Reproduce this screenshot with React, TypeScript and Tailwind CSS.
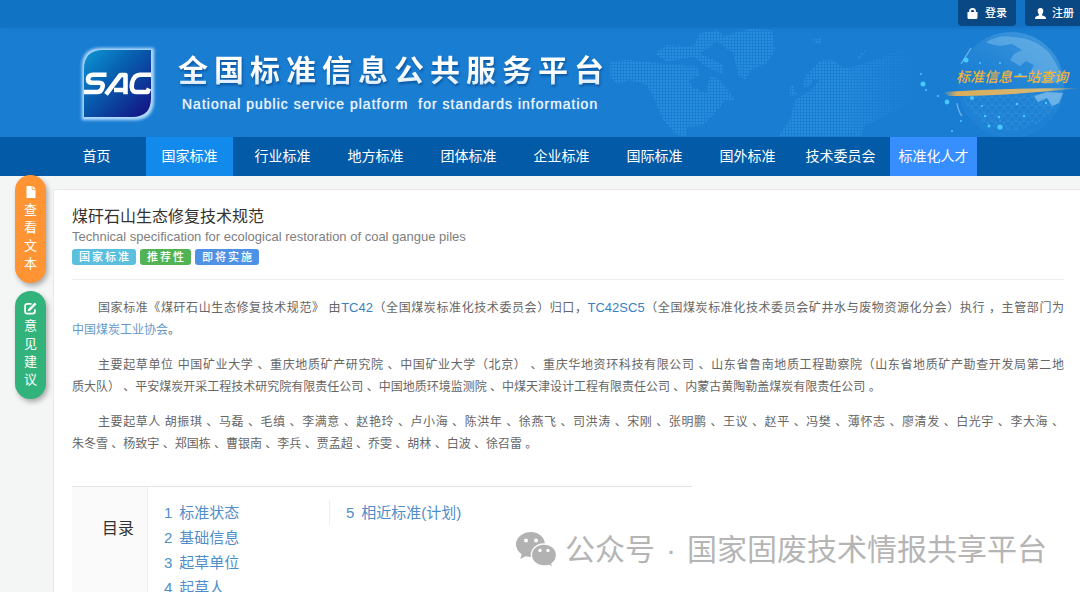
import React from "react";
import { FaFile } from "react-icons/fa";

const navItems = ["首页", "国家标准", "行业标准", "地方标准", "团体标准", "企业标准", "国际标准", "国外标准", "技术委员会", "标准化人才"];

const navTone = (i: number) =>
  i === 1 ? "bg-[#118aec]" : i === 9 ? "bg-[#378fff]" : "";

function Logo() {
  return (
    <svg width="80" height="80" viewBox="0 0 80 80" className="shrink-0" role="img" aria-label="SAC">
      <defs>
        <linearGradient id="logoFill" x1="0" y1="0" x2="1" y2="1">
          <stop offset="0" stopColor="#0c96d4" />
          <stop offset="0.45" stopColor="#0759ab" />
          <stop offset="1" stopColor="#150d80" />
        </linearGradient>
        <filter id="logoGlow" x="-20%" y="-20%" width="140%" height="140%">
          <feGaussianBlur stdDeviation="1.5" />
        </filter>
      </defs>
      <path d="M23 4H76V55Q76 76 56 76H4V23Q4 4 23 4Z" fill="#b4dcff" filter="url(#logoGlow)" />
      <path d="M25 6H73V54Q73 73 54 73H6V25Q6 6 25 6Z" fill="url(#logoFill)" />
      <g fill="none" stroke="#fff" strokeWidth="4.6" strokeLinejoin="round">
        <path d="M28.500 30.800H15Q10.500 31 10 35Q10 38.700 14 38.700H21Q25.500 38.700 24.500 43Q23.500 48 19 48H6" />
        <path d="M28 50.300L42.500 31H47.500L47.500 50.300M36 46H46" />
        <path d="M73 30.800H62Q56 31 54 39Q52.500 48 58.500 48H69.500L71 44.500" />
      </g>
    </svg>
  );
}

function HeaderArt() {
  return (
    <svg viewBox="0 0 480 111" width="480" height="111" className="absolute right-0 bottom-0" aria-hidden="true">
      <defs>
        <pattern id="mapDots" width="9" height="9" patternUnits="userSpaceOnUse">
          <rect width="6.500" height="6.500" fill="#42adf2" />
        </pattern>
        <linearGradient id="mapFade">
          <stop offset="0" stopColor="#fff" />
          <stop offset="0.75" stopColor="#fff" />
          <stop offset="1" stopColor="#000" />
        </linearGradient>
        <mask id="mapMask" maskUnits="userSpaceOnUse" x="0" y="0" width="960" height="360">
          <rect width="960" height="360" fill="url(#mapFade)" />
        </mask>
        <linearGradient id="globeFill" x1="0.8" y1="0" x2="0.2" y2="1">
          <stop offset="0" stopColor="#7cc0f0" stopOpacity="0.4" />
          <stop offset="0.6" stopColor="#4ba4e4" stopOpacity="0.08" />
          <stop offset="1" stopColor="#4ba4e4" stopOpacity="0.12" />
        </linearGradient>
        <linearGradient id="goldLine">
          <stop offset="0" stopColor="#d9b25c" stopOpacity="0" />
          <stop offset="0.1" stopColor="#d8ad5c" />
          <stop offset="0.75" stopColor="#d8b873" />
          <stop offset="1" stopColor="#d9b25c" stopOpacity="0.1" />
        </linearGradient>
        <pattern id="mesh" width="8" height="8" patternUnits="userSpaceOnUse">
          <path d="M0 8L4 0L8 8M0 8H8" fill="none" stroke="#6fc3f5" strokeWidth="0.5" />
        </pattern>
      </defs>
      <g transform="translate(0 -6) scale(0.33333)" fill="url(#mapDots)" opacity="0.36" mask="url(#mapMask)">
        <path d="M30 125L80 120L160 128L230 135L290 140L300 165L270 180L275 200L320 220L330 165L360 180L405 240L370 245L345 280L310 315L262 320L258 347L230 345L190 300L165 240L140 195L90 180L50 192L30 170Z" />
        <path d="M340 60L400 40L450 27L515 30L525 90L500 130L455 150L435 180L415 165L400 100L360 70Z" />
        <path d="M165 100L200 75L280 80L300 40L350 30L370 45L330 80L300 100L370 135L370 165L320 140L280 110L200 125Z" />
        <path d="M610 200L615 170L660 122L700 120L730 145L780 135L850 110L900 90L950 85L960 200L930 250L790 320L785 347H535L570 300L585 240L640 205L660 175L640 180L630 200ZM770 130L775 105L805 85L780 115ZM630 60L665 55L660 75ZM568 205L575 190L592 225L572 228Z" />
      </g>
      <circle cx="411" cy="59" r="53" fill="url(#globeFill)" />
      <path d="M362 68A50 45 0 0 0 460 68Z" fill="url(#mesh)" opacity="0.35" />
      <path d="M386 16Q400 8 412 11Q436 12 450 28Q460 42 462 54L458 58L450 54L446 58L437 54L430 47L434 39L426 35L420 40L410 34L414 28L422 24L412 18L400 20L390 18Z" fill="#8dc8ef" opacity="0.42" />
      <path d="M434 70L447 66L463 67L459 77L452 80L447 72L438 76Z" fill="#a4d5f5" opacity="0.55" />
      <path d="M361 38L371 22M357 77Q358 85 362 90" stroke="#9cd6fa" strokeWidth="1.4" opacity="0.6" fill="none" />
      <g fill="#46caff">
        <circle cx="323" cy="58" r="2.500" /><circle cx="347" cy="76" r="2.400" /><circle cx="366" cy="34" r="2.500" />
        <circle cx="372" cy="72" r="2" /><circle cx="400" cy="101" r="2.600" /><circle cx="389" cy="100" r="1.500" />
        <circle cx="321" cy="48" r="1" /><circle cx="326" cy="64" r="1" /><circle cx="338" cy="70" r="1" />
        <circle cx="361" cy="95" r="1" /><circle cx="352" cy="105" r="1" /><circle cx="385" cy="90" r="1.300" />
        <circle cx="417" cy="78" r="1.300" /><circle cx="424" cy="90" r="1.300" /><circle cx="399" cy="91" r="1.300" />
        <circle cx="382" cy="80" r="1.100" /><circle cx="446" cy="77" r="1.200" /><circle cx="380" cy="37" r="1" />
        <circle cx="400" cy="37" r="1.100" /><circle cx="420" cy="49" r="1.800" />
      </g>
      <path d="M343 66Q410 62 480 62Q410 70 349 70Z" fill="url(#goldLine)" />
    </svg>
  );
}

function LockIcon() {
  return (
    <svg width="11" height="11" viewBox="0 0 11 11" aria-hidden="true">
      <path d="M3 4.500V3Q3 1 5.500 1Q8 1 8 3V4.500" fill="none" stroke="#fff" strokeWidth="1.800" />
      <path d="M0.500 4H10.500V9.500Q10.500 11 9 11H2Q0.500 11 0.500 9.500Z" fill="#fff" />
    </svg>
  );
}

function UserIcon() {
  return (
    <svg width="11" height="11" viewBox="0 0 11 11" aria-hidden="true">
      <path d="M5.500 0Q8.300 0 8.300 3Q8.300 5 7 6.500V7.300L10 8.600Q11 9 11 11H0Q0 9 1 8.600L4 7.300V6.500Q2.700 5 2.700 3Q2.700 0 5.500 0Z" fill="#fff" />
    </svg>
  );
}

function EditIcon() {
  return (
    <svg width="13" height="13" viewBox="0 0 13 13" fill="none" stroke="#fff" aria-hidden="true">
      <path d="M7.500 1.800H3.400Q1.100 1.800 1.100 4V9.200Q1.100 11.600 3.400 11.600H8.600Q10.900 11.600 10.900 9.300V7.300" strokeWidth="1.800" />
      <path d="M5.200 7.800L11.600 1.400" strokeWidth="2.400" />
      <path d="M4 9L4.500 7L6 8.500Z" fill="#fff" strokeWidth="0.500" />
    </svg>
  );
}

function WeChatIcon() {
  return (
    <svg width="41" height="36" viewBox="0 0 41 36" className="shrink-0" aria-hidden="true">
      <path fill="#b2b2b2" d="M15 0C6.500 0 0 5.700 0 12.600c0 4 2.200 7.300 5.600 9.600L4.300 27l5.300-2.700c1.700.5 3.500.8 5.600.8C23 25 29 19.500 29 12.600S23 0 15 0Z" />
      <path fill="#b2b2b2" stroke="#fff" strokeWidth="1.300" d="M28 12c-7.200 0-12.600 4.900-12.600 11S20.800 34 28 34c1.700 0 3.300-.3 4.700-.7l4.300 2.300-1.200-3.900c2.900-2 4.700-5.100 4.700-8.700 0-6.100-5.400-11-12.500-11Z" />
      <g fill="#fff">
        <circle cx="10" cy="8.500" r="2" /><circle cx="20" cy="8.500" r="2" />
        <circle cx="24" cy="18.500" r="1.700" /><circle cx="32" cy="18.500" r="1.700" />
      </g>
    </svg>
  );
}

function SideButton({ label, tone, icon }: { label: string; tone: string; icon: React.ReactNode }) {
  return (
    <button aria-label={label} className={`flex w-[31px] flex-col items-center rounded-full pt-2 pb-[10px] text-[13px] leading-[18px] text-white shadow-[2px_3px_5px_rgba(0,0,0,0.3)] ${tone}`}>
      <span className="flex h-[18px] items-center">{icon}</span>
      {label.split("").map((c) => <span key={c}>{c}</span>)}
    </button>
  );
}

export default function App() {
  return (
    <div className="relative h-screen overflow-hidden bg-[#f4f5f5] font-['Liberation_Sans','Noto_Sans_CJK_SC',sans-serif]">
      <header className="relative bg-[#197dd2]">
        <div className="flex h-[26px] justify-end gap-[9px] bg-[#1173c4] shadow-[0_1px_3px_rgba(10,90,170,0.5)]">
          <a href="#login" className="flex w-[58px] items-center justify-center gap-[7px] rounded-b bg-[#0a4883] text-[11px] font-medium text-white"><LockIcon />登录</a>
          <a href="#register" className="flex w-[55px] items-center gap-[6px] rounded-bl bg-[#0a4883] pl-[10px] text-[11px] font-medium whitespace-nowrap text-white"><UserIcon />注册</a>
        </div>
        <div className="relative flex h-[111px] items-start pt-[18px] pl-[78px]">
          <HeaderArt />
          <Logo />
          <div className="relative ml-[20px] whitespace-nowrap text-white">
            <h1 className="mt-[4px] bg-linear-to-b from-white from-50% to-[#c2ddf5] bg-clip-text text-[30px] leading-[46px] font-bold tracking-[6px] text-transparent drop-shadow-[1px_2px_1px_rgba(0,50,110,0.5)]">全国标准信息公共服务平台</h1>
            <p className="ml-[4px] text-[14px] leading-[20px] tracking-[1px] whitespace-pre text-[#eaf5ff] [text-shadow:0_0_1px_#d5eaff]">National public service platform  for standards information</p>
          </div>
          <p className="absolute top-[40px] right-[12px] text-[14px] leading-[22px] font-medium text-[#f1b43b] italic">标准信息一站查询</p>
        </div>
        <nav className="flex h-[39px] gap-[6px] bg-[#035aa7] pl-[53px]">
          {navItems.map((t, i) => (
            <a key={t} href="#nav" className={`flex w-[87px] shrink-0 items-center justify-center text-[14px] whitespace-nowrap text-white ${navTone(i)}`}>{t}</a>
          ))}
        </nav>
      </header>

      <aside className="absolute top-[175px] left-[15px] flex flex-col gap-2">
        <SideButton label="查看文本" tone="bg-[#ff9435]" icon={<FaFile size={12} />} />
        <SideButton label="意见建议" tone="bg-[#32b37b]" icon={<EditIcon />} />
      </aside>

      <main className="mt-[13px] ml-[53px] min-h-screen border-t border-l border-[#ebe8e6] bg-white pt-[15px] pr-[16px] pl-[18px]">
        <h2 className="text-[16px] leading-[24px] text-[#333]">煤矸石山生态修复技术规范</h2>
        <p className="text-[13px] leading-[16px] text-[#808080]">Technical specification for ecological restoration of coal gangue piles</p>
        <div className="mt-[4px] flex gap-1 text-[11px] leading-[16px] font-medium tracking-[2px] text-white">
          <span className="rounded-[3px] bg-[#5bc0de] pr-[5px] pl-[7px]">国家标准</span>
          <span className="rounded-[3px] bg-[#53b354] pr-[5px] pl-[7px]">推荐性</span>
          <span className="rounded-[3px] bg-[#4e92e6] pr-[5px] pl-[7px]">即将实施</span>
        </div>
        <hr className="mt-[14px] border-[#eee]" />

        <section className="mt-[17px] flex flex-col gap-[13px] text-[12px] leading-[22px] text-[#666]">
          <p>
            <span className="block pl-[26px] [text-align-last:justify]">国家标准《煤矸石山生态修复技术规范》 由<a href="#tc42" className="text-[13px] text-[#3b80c3]">TC42</a>（全国煤炭标准化技术委员会）归口，<a href="#tc42sc5" className="text-[13px] text-[#3b80c3]">TC42SC5</a>（全国煤炭标准化技术委员会矿井水与废物资源化分会）执行 ，主管部门为</span>
            <span className="block"><a href="#ccia" className="text-[#6799c6]">中国煤炭工业协会</a>。</span>
          </p>
          <p>
            <span className="block pl-[26px] [text-align-last:justify]">主要起草单位 中国矿业大学 、重庆地质矿产研究院 、中国矿业大学（北京） 、重庆华地资环科技有限公司 、山东省鲁南地质工程勘察院（山东省地质矿产勘查开发局第二地</span>
            <span className="block">质大队） 、平安煤炭开采工程技术研究院有限责任公司 、中国地质环境监测院 、中煤天津设计工程有限责任公司 、内蒙古黄陶勒盖煤炭有限责任公司 。</span>
          </p>
          <p>
            <span className="block pl-[26px] [text-align-last:justify]">主要起草人 胡振琪 、马磊 、毛缜 、李满意 、赵艳玲 、卢小海 、陈洪年 、徐燕飞 、司洪涛 、宋刚 、张明鹏 、王议 、赵平 、冯樊 、薄怀志 、廖清发 、白光宇 、李大海 、</span>
            <span className="block">朱冬雪 、杨致宇 、郑国栋 、曹银南 、李兵 、贾孟超 、乔雯 、胡林 、白波 、徐召雷 。</span>
          </p>
        </section>

        <section className="mt-[31px] flex h-[200px] max-w-[620px] border-t border-[#e4e4e4]">
          <h3 className="w-[76px] border-r border-[#ededed] bg-[#fafafa] pt-[29px] pl-[30px] text-[16px] leading-[26px] text-[#333]">目录</h3>
          <div className="flex pt-[13px] text-[15px] leading-[25px] text-[#4f8ec8]">
            <ol className="w-[181px] pl-[16px]">
              {["标准状态", "基础信息", "起草单位", "起草人"].map((t, i) => (
                <li key={t}><a href="#section" className="flex gap-[7px]"><span>{i + 1}</span>{t}</a></li>
              ))}
            </ol>
            <ol className="h-[25px] border-l border-[#eee] pl-[16px]" start={5}>
              <li><a href="#section" className="flex gap-[7px]"><span>5</span>相近标准(计划)</a></li>
            </ol>
          </div>
        </section>
      </main>

      <div className="absolute right-[33px] bottom-[20px] flex items-center text-[30px] leading-[44px] whitespace-nowrap text-[#b5b5b5]">
        <WeChatIcon />
        <span className="ml-[8px]">公众号</span>
        <span className="w-[32px] text-center">·</span>
        <span>国家固废技术情报共享平台</span>
      </div>
    </div>
  );
}
